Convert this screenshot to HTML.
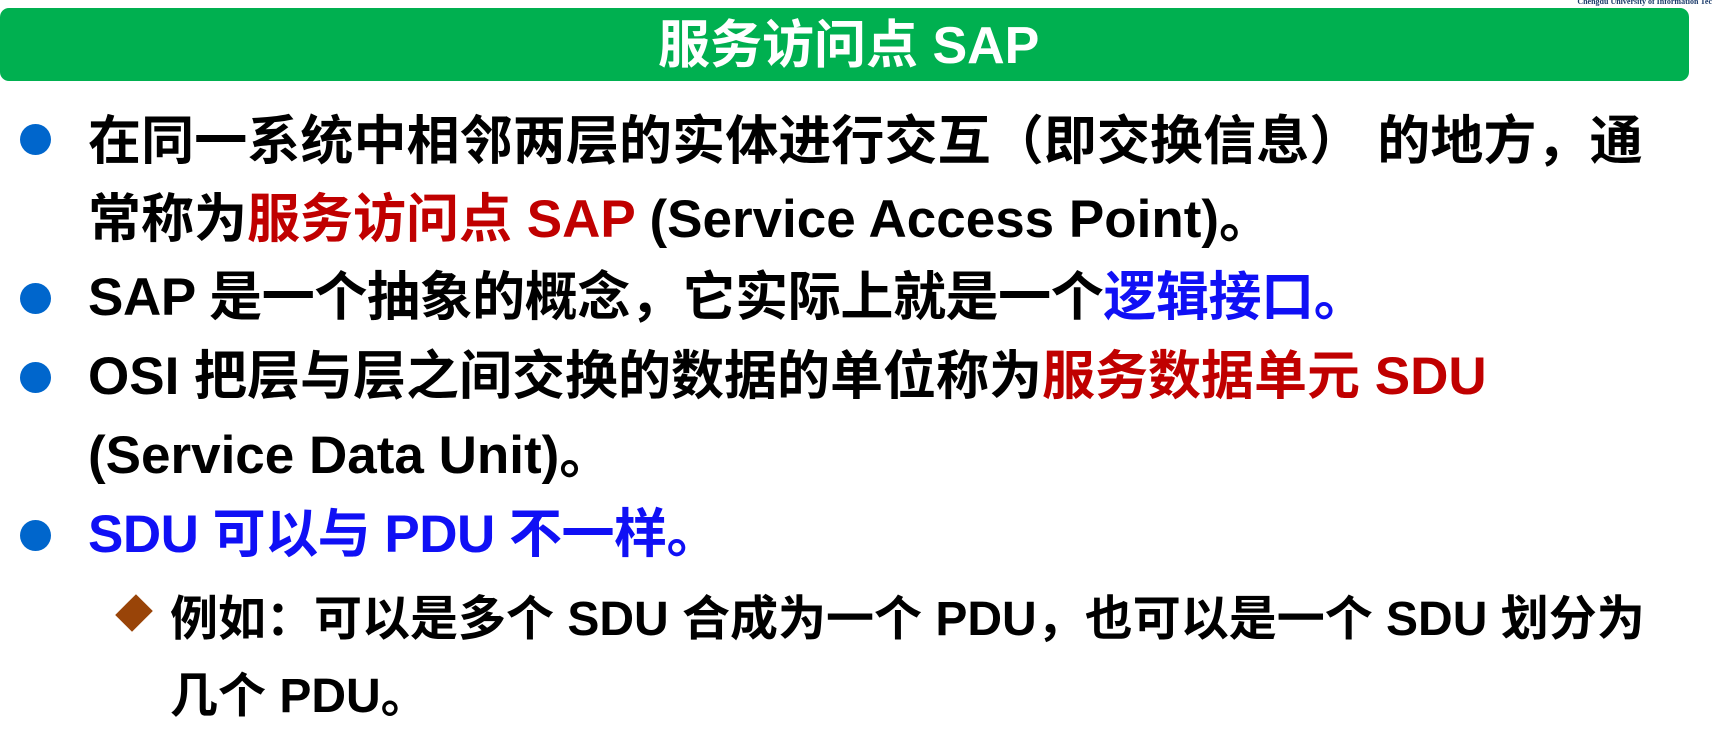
<!DOCTYPE html>
<html><head><meta charset="utf-8"><style>
html,body{margin:0;padding:0;background:#fff;}
body{width:1712px;height:730px;position:relative;overflow:hidden;font-family:"Liberation Sans","Noto Sans CJK SC",sans-serif;font-weight:bold;color:#000;}
.bar{position:absolute;left:0;top:8px;width:1689px;height:73px;background:#00B050;border-radius:9px;}
.title{position:absolute;left:0;width:1712px;top:8px;height:73px;line-height:76px;color:#fff;font-size:52px;}
.title span{position:absolute;left:658px;white-space:nowrap;}
.logo{position:absolute;right:0;top:-3px;font-family:"Liberation Serif",serif;font-size:8px;color:#1a3a6a;font-weight:bold;}
.l{position:absolute;white-space:nowrap;font-size:53px;line-height:80px;height:80px;}
.dot{position:absolute;left:20px;width:31px;height:31px;border-radius:50%;background:#0066CC;}
.s{font-size:48px;}
.r{color:#C00000}.b{color:#1010F5}
.dia{position:absolute;left:120px;top:599px;width:28px;height:28px;background:#994408;transform:rotate(45deg) scale(0.85,1.05);}
</style></head><body>
<div class="bar"></div>
<div class="title"><span>服务访问点 SAP</span></div>
<div class="logo">Chengdu University of Information Tec</div>

<div class="dot" style="top:124px"></div>
<div class="l" style="left:88px;top:102px;letter-spacing:0.1px">在同一系统中相邻两层的实体进行交互（即交换信息） 的地方，通</div>
<div class="l" style="left:88px;top:180px">常称为<span class="r">服务访问点 SAP</span> (Service Access Point)。</div>
<div class="dot" style="top:283px"></div>
<div class="l" style="left:88px;top:258px;letter-spacing:-0.4px">SAP 是一个抽象的概念，它实际上就是一个<span class="b">逻辑接口。</span></div>
<div class="dot" style="top:362px"></div>
<div class="l" style="left:88px;top:337px;letter-spacing:0px">OSI 把层与层之间交换的数据的单位称为<span class="r">服务数据单元 SDU</span></div>
<div class="l" style="left:88px;top:416px">(Service Data Unit)。</div>
<div class="dot" style="top:520px"></div>
<div class="l b" style="left:88px;top:495px;letter-spacing:-0.5px">SDU 可以与 PDU 不一样。</div>
<div class="dia"></div>
<div class="l s" style="left:170px;top:580px;letter-spacing:0px">例如：可以是多个 SDU 合成为一个 PDU，也可以是一个 SDU 划分为</div>
<div class="l s" style="left:170px;top:657px">几个 PDU。</div>
</body></html>
